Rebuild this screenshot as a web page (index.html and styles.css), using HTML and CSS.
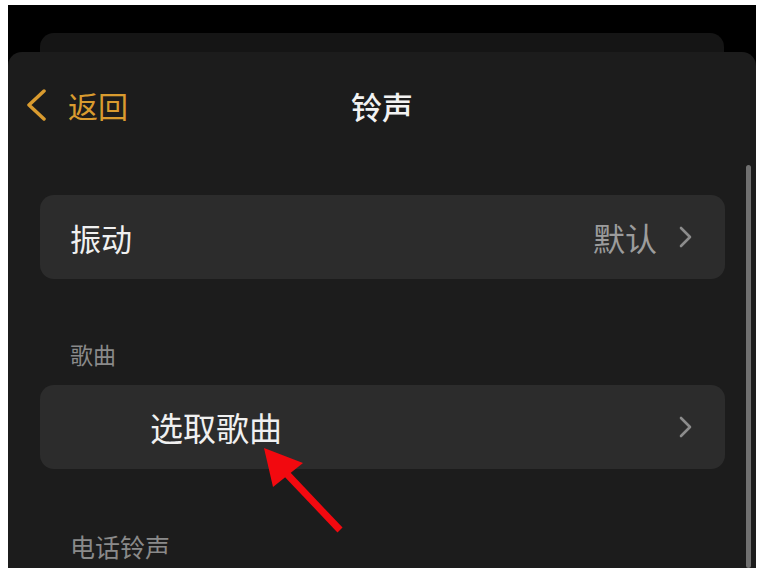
FILE: index.html
```html
<!DOCTYPE html>
<html lang="zh-CN">
<head>
  <meta charset="UTF-8" />
  <meta name="viewport" content="width=device-width, initial-scale=1.0"/>
  <title>铃声</title>
  <link rel="stylesheet" href="styles.css">
</head>
<body>
  <div class="screen">
    <div class="stack-card"></div>

    <div class="sheet">
      <div class="nav">
        <div class="back">
          <svg class="back-icon" width="22" height="32" viewBox="0 0 22 32">
            <path d="M19 2 L4 16 L19 30" fill="none" stroke="#d99b2f" stroke-width="3.5" stroke-linecap="round" stroke-linejoin="round"/>
          </svg>
          <span>返回</span>
        </div>
        <div class="title">铃声</div>
        <div></div>
      </div>

      <div class="row row-first">
        <span class="row-label">振动</span>
        <span class="row-value">默认</span>
        <svg class="chevron" width="15" height="24" viewBox="0 0 15 24">
          <path d="M3 3 L12 12 L3 21" fill="none" stroke="#8c8c8c" stroke-width="2.6" stroke-linecap="round" stroke-linejoin="round"/>
        </svg>
      </div>

      <div class="section-title">歌曲</div>

      <div class="row row-pick">
        <span class="row-label pick-label">选取歌曲</span>
        <svg class="chevron" width="15" height="24" viewBox="0 0 15 24">
          <path d="M3 3 L12 12 L3 21" fill="none" stroke="#8c8c8c" stroke-width="2.6" stroke-linecap="round" stroke-linejoin="round"/>
        </svg>
      </div>

      <div class="section-title section-ring">电话铃声</div>

      <div class="scrollbar"></div>
    </div>

    <svg class="arrow" width="95" height="100" viewBox="0 0 95 100">
      <line x1="27" y1="32" x2="82" y2="90" stroke="#f2090f" stroke-width="7"/>
      <polygon points="6,8 45,23 15,47" fill="#f2090f"/>
    </svg>
  </div>
</body>
</html>
```

FILE: styles.css
```css
body {
  margin: 0;
  background: #fff;
  font-family: "Noto Sans CJK SC", "Noto Sans", sans-serif;
}

.screen {
  position: relative;
  margin: 5px 3px 0 8px;
  height: 563px;
  background: #000;
  overflow: hidden;
}

.stack-card {
  height: 19px;
  margin: 28px 32px 0 32px;
  background: #151515;
  border-radius: 14px 14px 0 0;
}

.sheet {
  position: relative;
  height: 516px;
  background: #1c1c1c;
  border-radius: 14px 14px 0 0;
}

.nav {
  height: 106px;
  display: grid;
  grid-template-columns: 1fr auto 1fr;
  align-items: center;
}

.back {
  display: flex;
  align-items: center;
  gap: 21px;
  padding-left: 17px;
  color: #d99b2f;
  font-size: 30px;
  line-height: 1;
}

.back-icon {
  display: block;
}

.title {
  color: #f2f2f2;
  font-size: 31px;
  font-weight: 500;
  line-height: 1;
}

.row {
  display: flex;
  align-items: center;
  height: 84px;
  margin: 0 31px 0 32px;
  padding: 0 32px 0 30px;
  background: #2c2c2c;
  border-radius: 14px;
}

.row-first {
  margin-top: 37px;
}

.row-label {
  flex: 1;
  color: #f0f0f0;
  font-size: 31px;
  line-height: 1;
}

.row-value {
  color: #9c9c9c;
  font-size: 32px;
  line-height: 1;
  margin-right: 21px;
}

.chevron {
  display: block;
}

.pick-label {
  padding-left: 80px;
  font-size: 33px;
}

.section-title {
  margin: 61px 0 17px 62px;
  color: #8a8a8a;
  font-size: 23px;
  line-height: 28px;
}

.section-ring {
  margin-top: 62px;
  font-size: 25px;
  line-height: 30px;
}

.scrollbar {
  position: absolute;
  right: 5px;
  top: 113px;
  bottom: 0;
  width: 5px;
  background: #707070;
  border-radius: 3px;
}

.arrow {
  position: absolute;
  left: 250px;
  top: 435px;
}
```
